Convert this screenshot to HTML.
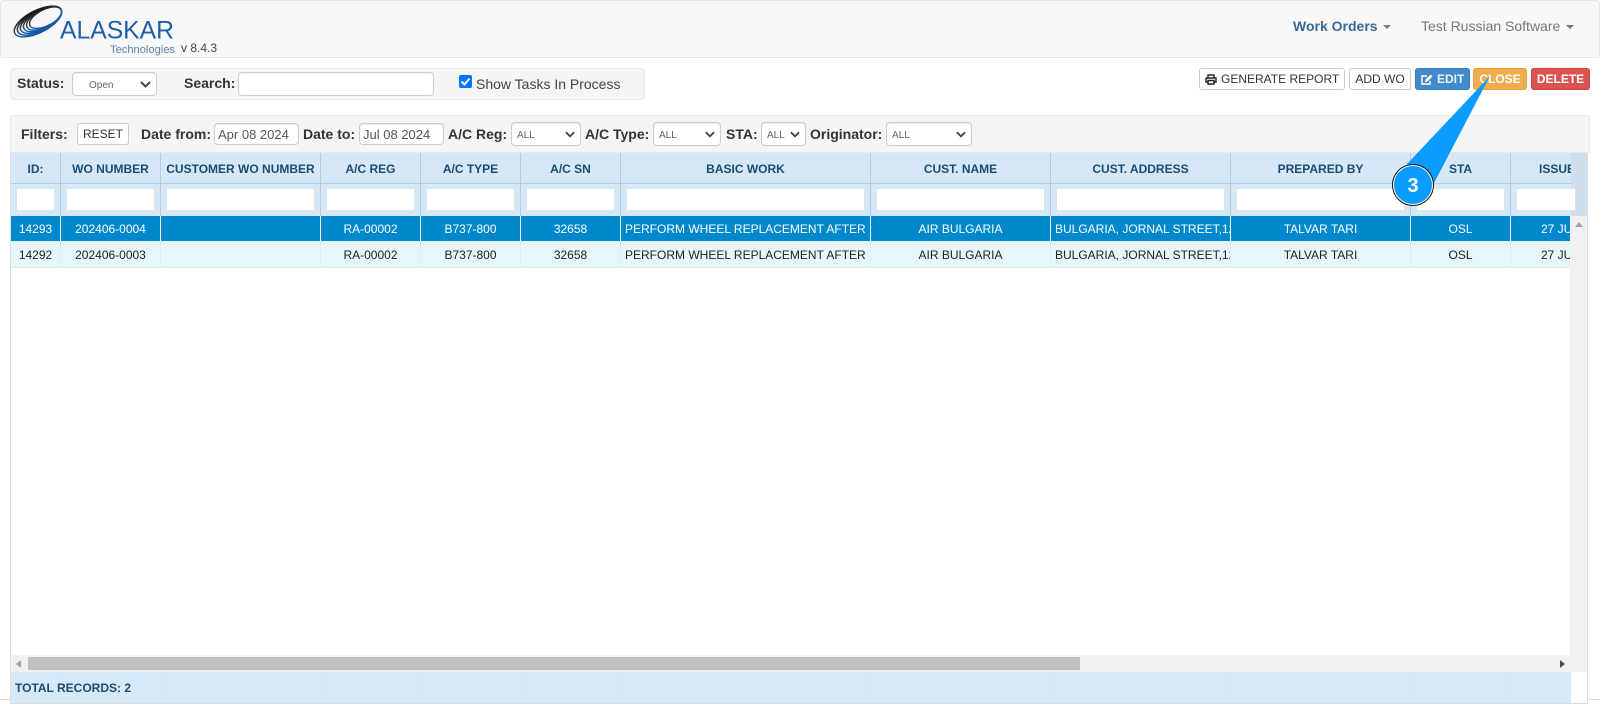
<!DOCTYPE html>
<html><head><meta charset="utf-8"><title>Work Orders</title>
<style>
html,body{margin:0;padding:0;width:1600px;height:707px;overflow:hidden;background:#fff;font-family:"Liberation Sans",sans-serif;color:#333}
.a{position:absolute;box-sizing:border-box;white-space:nowrap}
.lb{font-weight:700;font-size:14px;line-height:16px;color:#333}
.sel{background:#fff;border:1px solid #ccc;border-radius:4px;font-size:10px;color:#666;padding-left:5px;box-shadow:inset 0 1px 1px rgba(0,0,0,.075)}
.sel svg{position:absolute;right:5px;top:50%;margin-top:-3px}
.inp{background:#fff;border:1px solid #ccc;border-radius:4px;color:#555;font-size:13px;box-shadow:inset 0 1px 1px rgba(0,0,0,.075)}
.btn{border-radius:3px;font-size:12px;text-align:center;line-height:20px;height:22px;top:68px;border:1px solid #ccc;background:#fff;color:#333}
.th,.cell{text-align:center;overflow:hidden;font-size:12px}
.th{top:153px;height:31px;line-height:32px;font-weight:700;color:#1b4a72;background:#d6e8f7;border-right:1px solid #b5cde2;border-bottom:1px solid #b5cde2}
.fc{top:184px;height:32px;background:#d6e8f7;border-right:1px solid #b5cde2}
.fc i{position:absolute;left:5px;right:5px;top:4px;height:23px;background:#fff;border:1px solid #dde5ec;display:block;box-sizing:border-box}
.r1{top:216px;height:25px;line-height:26px;background:#0088cc;color:#fff;border-right:1px solid #fff}
.r2{top:241px;height:27px;line-height:28px;background:#e6f6f9;color:#222;border-right:1px solid #dcecef;border-bottom:1px solid #dcecef}
.left{text-align:left;padding-left:4px}
.ft{top:672px;height:31px;background:#d6e9f8;border-right:1px solid #d3e6f5}
</style></head><body>

<!-- navbar -->
<div class="a" style="left:0;top:0;width:1600px;height:58px;background:#f8f8f8;border:1px solid #e7e7e7;border-radius:4px"></div>
<svg class="a" style="left:8px;top:3px" width="62" height="38" viewBox="0 0 62 38">
<defs><linearGradient id="g" gradientUnits="userSpaceOnUse" x1="0" y1="-12" x2="0" y2="12">
<stop offset="0" stop-color="#111"/><stop offset=".45" stop-color="#444"/><stop offset=".62" stop-color="#1d62b0"/><stop offset="1" stop-color="#14539f"/></linearGradient></defs>
<g transform="translate(30 18.500) rotate(-27)" fill="none" stroke="url(#g)" stroke-width="1.500">
<ellipse cx="0" cy="0" rx="26" ry="11"/>
<ellipse cx="1.700" cy="0" rx="24.300" ry="10.400"/>
<ellipse cx="3.400" cy="0" rx="22.600" ry="9.800"/>
<ellipse cx="5.100" cy="0" rx="20.900" ry="9.300"/>
<ellipse cx="6.800" cy="0" rx="19.200" ry="8.800"/>
<ellipse cx="8.500" cy="0" rx="17.500" ry="8.200"/>
</g></svg>
<svg class="a" style="left:58px;top:14px" width="125" height="44" viewBox="0 0 125 44">
<text x="2" y="24.500" font-family="Liberation Sans" font-size="25" fill="#1c5ea8" textLength="114" lengthAdjust="spacingAndGlyphs">ALASKAR</text>
<text x="52" y="39" font-family="Liberation Sans" font-size="11" fill="#5d83ad" textLength="65" lengthAdjust="spacingAndGlyphs">Technologies</text>
</svg>
<div class="a" style="left:181px;top:41px;font-size:12px;line-height:14px;color:#444">v 8.4.3</div>
<div class="a" style="left:1293px;top:18px;font-size:14px;line-height:16px;font-weight:700;color:#3a6a94">Work Orders</div>
<div class="a" style="left:1383px;top:25px;border:4px solid transparent;border-top-color:#777;border-bottom:0"></div>
<div class="a" style="left:1421px;top:18px;font-size:14px;line-height:16px;color:#777">Test Russian Software</div>
<div class="a" style="left:1566px;top:25px;border:4px solid transparent;border-top-color:#777;border-bottom:0"></div>

<!-- status bar -->
<div class="a" style="left:10px;top:68px;width:635px;height:32px;background:#f5f5f5;border:1px solid #e9e9e9;border-radius:4px"></div>
<div class="a lb" style="left:17px;top:75px">Status:</div>
<div class="a sel" style="left:72px;top:72px;width:85px;height:24px;line-height:26px;padding-left:16px">Open<svg width="11" height="7" viewBox="0 0 11 7"><path d="M1 1l4.500 4.500L10 1" fill="none" stroke="#444" stroke-width="2"/></svg></div>
<div class="a lb" style="left:184px;top:75px">Search:</div>
<div class="a inp" style="left:238px;top:72px;width:196px;height:24px"></div>
<svg class="a" style="left:459px;top:75px" width="13" height="13" viewBox="0 0 13 13"><rect width="13" height="13" rx="2" fill="#0075ff"/><path d="M2.500 6.500l3 3 5-6" fill="none" stroke="#fff" stroke-width="2"/></svg>
<div class="a" style="left:476px;top:76px;font-size:14px;line-height:16px;color:#444">Show Tasks In Process</div>

<!-- action buttons -->
<div class="a btn" style="left:1199px;width:146px;padding-left:21px;text-align:left">GENERATE REPORT<svg class="a" style="left:5px;top:5px" width="12" height="11" viewBox="0 0 12 11"><path d="M3 4V1h6v3M1 4h10v4H9M3 8H1V4M3 6.500h6V10H3z" fill="none" stroke="#222" stroke-width="1.400"/></svg></div>
<div class="a btn" style="left:1349px;width:62px">ADD WO</div>
<div class="a btn" style="left:1415px;width:55px;background:#428bca;border-color:#357ebd;color:#e8f1f8;font-weight:700;padding-left:21px;text-align:left">EDIT<svg class="a" style="left:5px;top:5px" width="12" height="11" viewBox="0 0 12 11"><path d="M9 7v3H1V2h5" fill="none" stroke="#fff" stroke-width="1.500"/><path d="M4 8l.5-2.500L9.500.5l2 2-5 5z" fill="#fff"/></svg></div>
<div class="a btn" style="left:1473px;width:54px;background:#f0ad4e;border-color:#eea236;color:#fff;font-weight:700">CLOSE</div>
<div class="a btn" style="left:1531px;width:59px;background:#d9534f;border-color:#d43f3a;color:#fff;font-weight:700">DELETE</div>

<!-- filter bar -->
<div class="a" style="left:10px;top:115px;width:1580px;height:38px;background:#f5f5f5;border:1px solid #e9e9e9"></div>
<div class="a lb" style="left:21px;top:126px">Filters:</div>
<div class="a" style="left:77px;top:123px;width:52px;height:22px;border:1px solid #ccc;border-radius:3px;background:#fff;font-size:12px;line-height:20px;text-align:center">RESET</div>
<div class="a lb" style="left:141px;top:126px">Date from:</div>
<div class="a inp" style="left:214px;top:123px;width:85px;height:22px;line-height:22px;padding-left:3px">Apr 08 2024</div>
<div class="a lb" style="left:303px;top:126px">Date to:</div>
<div class="a inp" style="left:359px;top:123px;width:85px;height:22px;line-height:22px;padding-left:3px">Jul 08 2024</div>
<div class="a lb" style="left:448px;top:126px">A/C Reg:</div>
<div class="a sel" style="left:511px;top:122px;width:70px;height:24px;line-height:25px">ALL<svg width="10" height="7" viewBox="0 0 11 7"><path d="M1 1l4.500 4.500L10 1" fill="none" stroke="#444" stroke-width="2"/></svg></div>
<div class="a lb" style="left:585px;top:126px">A/C Type:</div>
<div class="a sel" style="left:653px;top:122px;width:68px;height:24px;line-height:25px">ALL<svg width="10" height="7" viewBox="0 0 11 7"><path d="M1 1l4.500 4.500L10 1" fill="none" stroke="#444" stroke-width="2"/></svg></div>
<div class="a lb" style="left:726px;top:126px">STA:</div>
<div class="a sel" style="left:761px;top:122px;width:45px;height:24px;line-height:25px">ALL<svg width="10" height="7" viewBox="0 0 11 7"><path d="M1 1l4.500 4.500L10 1" fill="none" stroke="#444" stroke-width="2"/></svg></div>
<div class="a lb" style="left:810px;top:126px">Originator:</div>
<div class="a sel" style="left:886px;top:122px;width:86px;height:24px;line-height:25px">ALL<svg width="10" height="7" viewBox="0 0 11 7"><path d="M1 1l4.500 4.500L10 1" fill="none" stroke="#444" stroke-width="2"/></svg></div>

<!-- table frame -->
<div class="a" style="left:10px;top:153px;width:1578px;height:551px;border:1px solid #ddd;border-top:0;background:#fff"></div>

<!-- header -->
<div class="a th" style="left:11px;width:50px">ID:</div>
<div class="a th" style="left:61px;width:100px">WO NUMBER</div>
<div class="a th" style="left:161px;width:160px">CUSTOMER WO NUMBER</div>
<div class="a th" style="left:321px;width:100px">A/C REG</div>
<div class="a th" style="left:421px;width:100px">A/C TYPE</div>
<div class="a th" style="left:521px;width:100px">A/C SN</div>
<div class="a th" style="left:621px;width:250px">BASIC WORK</div>
<div class="a th" style="left:871px;width:180px">CUST. NAME</div>
<div class="a th" style="left:1051px;width:180px">CUST. ADDRESS</div>
<div class="a th" style="left:1231px;width:180px">PREPARED BY</div>
<div class="a th" style="left:1411px;width:100px">STA</div>
<div class="a th" style="left:1511px;width:60px;text-align:left;padding-left:28px;border-right:0">ISSUE</div>
<div class="a" style="left:1571px;top:153px;width:16px;height:63px;background:#cfdfee"></div>

<!-- filter inputs -->
<div class="a fc" style="left:11px;width:50px"><i></i></div>
<div class="a fc" style="left:61px;width:100px"><i></i></div>
<div class="a fc" style="left:161px;width:160px"><i></i></div>
<div class="a fc" style="left:321px;width:100px"><i></i></div>
<div class="a fc" style="left:421px;width:100px"><i></i></div>
<div class="a fc" style="left:521px;width:100px"><i></i></div>
<div class="a fc" style="left:621px;width:250px"><i></i></div>
<div class="a fc" style="left:871px;width:180px"><i></i></div>
<div class="a fc" style="left:1051px;width:180px"><i></i></div>
<div class="a fc" style="left:1231px;width:180px"><i></i></div>
<div class="a fc" style="left:1411px;width:100px"><i></i></div>
<div class="a fc" style="left:1511px;width:60px;border-right:0"><i style="right:-5px"></i></div>

<!-- row 1 -->
<div class="a cell r1" style="left:11px;width:50px">14293</div>
<div class="a cell r1" style="left:61px;width:100px">202406-0004</div>
<div class="a cell r1" style="left:161px;width:160px"></div>
<div class="a cell r1" style="left:321px;width:100px">RA-00002</div>
<div class="a cell r1" style="left:421px;width:100px">B737-800</div>
<div class="a cell r1" style="left:521px;width:100px">32658</div>
<div class="a cell r1 left" style="left:621px;width:250px">PERFORM WHEEL REPLACEMENT AFTER</div>
<div class="a cell r1" style="left:871px;width:180px">AIR BULGARIA</div>
<div class="a cell r1 left" style="left:1051px;width:180px">BULGARIA, JORNAL STREET,12</div>
<div class="a cell r1" style="left:1231px;width:180px">TALVAR TARI</div>
<div class="a cell r1" style="left:1411px;width:100px">OSL</div>
<div class="a cell r1" style="left:1511px;width:60px;text-align:left;padding-left:30px;border-right:0">27 JUN</div>

<!-- row 2 -->
<div class="a cell r2" style="left:11px;width:50px">14292</div>
<div class="a cell r2" style="left:61px;width:100px">202406-0003</div>
<div class="a cell r2" style="left:161px;width:160px"></div>
<div class="a cell r2" style="left:321px;width:100px">RA-00002</div>
<div class="a cell r2" style="left:421px;width:100px">B737-800</div>
<div class="a cell r2" style="left:521px;width:100px">32658</div>
<div class="a cell r2 left" style="left:621px;width:250px">PERFORM WHEEL REPLACEMENT AFTER</div>
<div class="a cell r2" style="left:871px;width:180px">AIR BULGARIA</div>
<div class="a cell r2 left" style="left:1051px;width:180px">BULGARIA, JORNAL STREET,12</div>
<div class="a cell r2" style="left:1231px;width:180px">TALVAR TARI</div>
<div class="a cell r2" style="left:1411px;width:100px">OSL</div>
<div class="a cell r2" style="left:1511px;width:60px;text-align:left;padding-left:30px;border-right:0">27 JUN</div>

<!-- scrollbars -->
<div class="a" style="left:1570px;top:216px;width:17px;height:456px;background:#f1f1f1"></div>
<div class="a" style="left:1575px;top:222px;border:4px solid transparent;border-bottom:5px solid #a3a3a3;border-top:0"></div>
<div class="a" style="left:1575px;top:661px;border:4px solid transparent;border-top:5px solid #a3a3a3;border-bottom:0"></div>
<div class="a" style="left:11px;top:655px;width:1576px;height:17px;background:#f1f1f1"></div>
<div class="a" style="left:28px;top:657px;width:1052px;height:13px;background:#c1c1c1"></div>
<div class="a" style="left:16px;top:660px;border:4px solid transparent;border-right:5px solid #a3a3a3;border-left:0"></div>
<div class="a" style="left:1560px;top:660px;border:4px solid transparent;border-left:5px solid #505050;border-right:0"></div>

<!-- footer -->
<div class="a ft" style="left:11px;width:50px"></div>
<div class="a ft" style="left:61px;width:100px"></div>
<div class="a ft" style="left:161px;width:160px"></div>
<div class="a ft" style="left:321px;width:100px"></div>
<div class="a ft" style="left:421px;width:100px"></div>
<div class="a ft" style="left:521px;width:100px"></div>
<div class="a ft" style="left:621px;width:250px"></div>
<div class="a ft" style="left:871px;width:180px"></div>
<div class="a ft" style="left:1051px;width:180px"></div>
<div class="a ft" style="left:1231px;width:180px"></div>
<div class="a ft" style="left:1411px;width:100px"></div>
<div class="a ft" style="left:1511px;width:60px;border-right:0"></div>
<div class="a" style="left:15px;top:681px;font-size:12px;line-height:14px;font-weight:700;color:#1b4a72">TOTAL RECORDS: 2</div>
<div class="a" style="left:0;top:699px;width:10px;height:1px;background:#ddd"></div>
<div class="a" style="left:1588px;top:699px;width:12px;height:1px;background:#ddd"></div>

<!-- callout -->
<svg class="a" style="left:1380px;top:70px" width="120" height="145" viewBox="0 0 120 145">
<path d="M110 6L27 94 54 113z" fill="#0c9bff"/>
<circle cx="33" cy="115" r="19.500" fill="#0c9bff" stroke="#fff" stroke-width="1"/>
<circle cx="33" cy="115" r="20.500" fill="none" stroke="#111" stroke-width="1"/>
<text x="33" y="122" text-anchor="middle" font-family="Liberation Sans" font-weight="700" font-size="20" fill="#fff">3</text>
</svg>
</body></html>
